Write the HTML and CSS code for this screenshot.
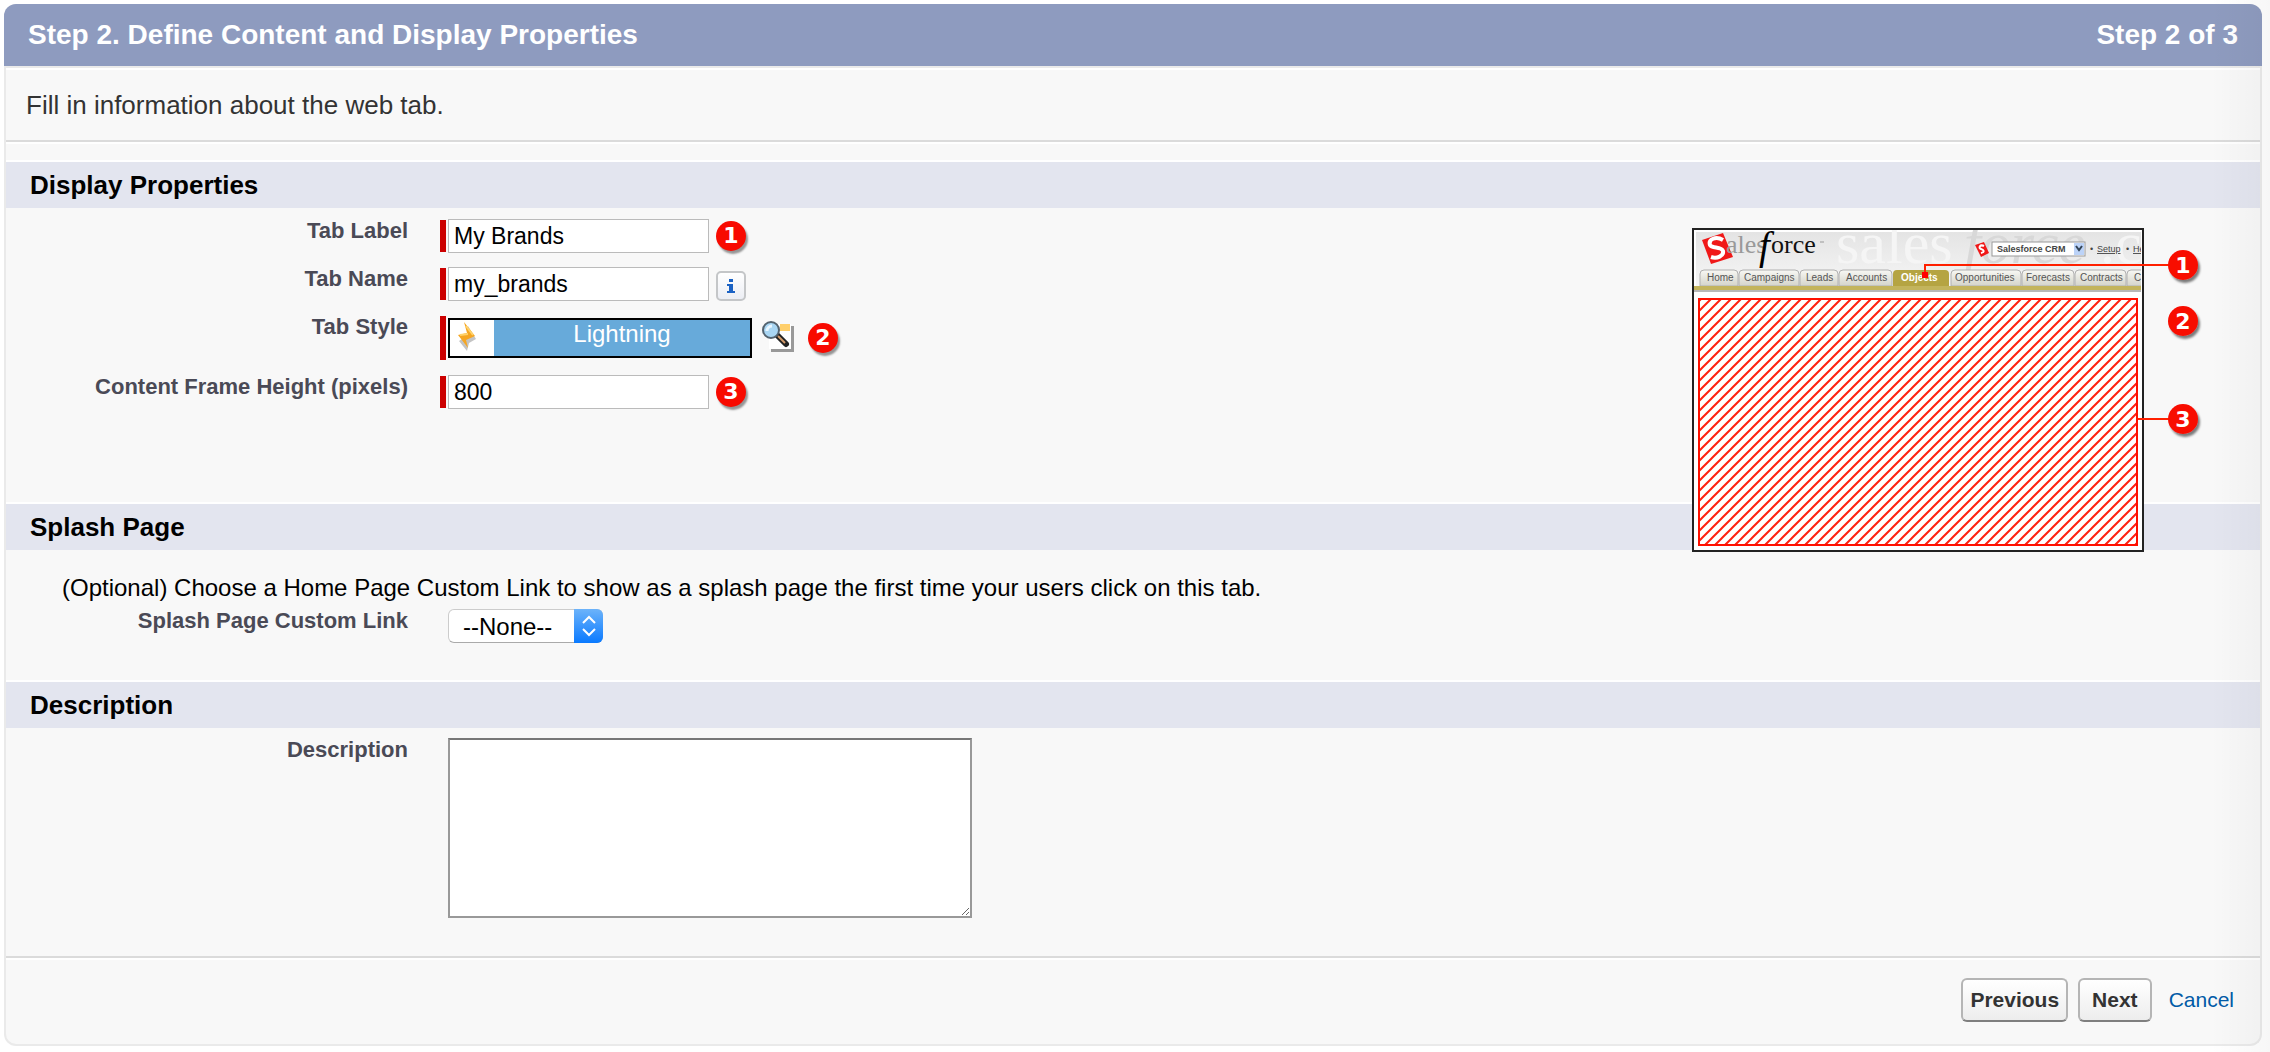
FILE: index.html
```html
<!DOCTYPE html>
<html lang="en">
<head>
    <meta charset="UTF-8">
    <meta name="viewport" content="width=device-width, initial-scale=1.0">
    <title>New Web Tab</title>
    <link rel="stylesheet" href="styles.css">
</head>
<body>
    <form class="wizard">
        <header class="wizard-header">
            <h1>Step 2. Define Content and Display Properties</h1>
            <span>Step 2 of 3</span>
        </header>
        <p class="intro">Fill in information about the web tab.</p>

        <section class="section display-section">
            <h2>Display Properties</h2>
            <div class="rows">
                <div class="row">
                    <label for="tabLabel">Tab Label</label>
                    <div class="field required">
                        <input type="text" id="tabLabel" value="My Brands">
                        <span class="badge">1</span>
                    </div>
                </div>
                <div class="row">
                    <label for="tabName">Tab Name</label>
                    <div class="field required">
                        <input type="text" id="tabName" value="my_brands">
                        <button type="button" class="info-button" aria-label="Help">
                            <svg width="30" height="30" viewBox="0 0 30 30"><path d="M13 8h4v3h-4zM11 13h6v7h2v2h-8v-2h2v-5h-2z" fill="#1b62c4"/></svg>
                        </button>
                    </div>
                </div>
                <div class="row">
                    <label for="tabStyle">Tab Style</label>
                    <div class="field required tall">
                        <button type="button" id="tabStyle" class="tab-style">
                            <svg width="44" height="36" viewBox="0 0 44 36">
                                <path d="M18 6l8 13-7 4-2 8-8-10 9-6z" fill="#c4c4c4"/>
                                <path d="M14 2l11 14-9 4 2 8-10-13 9-2z" fill="#f5a623"/>
                                <path d="M16 6l7 9M10 15l8-1" stroke="#ffd36b" stroke-width="2" fill="none"/>
                            </svg>
                            <span>Lightning</span>
                        </button>
                        <button type="button" class="lookup-button" aria-label="Tab Style Lookup">
                            <svg width="34" height="34" viewBox="0 0 34 34">
                                <path d="M9 5h23v26H9z" fill="#999"/>
                                <path d="M7 3h22v25H7z" fill="#fff"/>
                                <path d="M18 3h10v7H18z" fill="#ffcf6b"/>
                                <path d="M16 15l8 8" stroke="#222" stroke-width="6" stroke-linecap="round"/>
                                <path d="M16 15l7 7" stroke="#d29a6a" stroke-width="2"/>
                                <circle cx="9" cy="9" r="8" fill="#a9d6f3" stroke="#54636f" stroke-width="2"/>
                                <path d="M5 10a5 5 0 0 1 5-5" stroke="#e8f6ff" stroke-width="3" fill="none"/>
                            </svg>
                        </button>
                        <span class="badge">2</span>
                    </div>
                </div>
                <div class="row">
                    <label for="frameHeight">Content Frame Height (pixels)</label>
                    <div class="field required">
                        <input type="text" id="frameHeight" value="800">
                        <span class="badge">3</span>
                    </div>
                </div>
            </div>

            <svg class="preview" width="512" height="324" viewBox="0 0 512 324" role="img" aria-label="Web tab layout">
                <defs>
                    <pattern id="hatch" width="10" height="10" patternUnits="userSpaceOnUse">
                        <path d="M-2 12L12 -2M-2 2L2 -2M8 12L12 8" stroke="#ff2010" stroke-width="2"/>
                    </pattern>
                    <linearGradient id="sky" x1="0" y1="0" x2="0" y2="1">
                        <stop offset="0" stop-color="#e4e4e4"/>
                        <stop offset="1" stop-color="#f6f6f6"/>
                    </linearGradient>
                    <linearGradient id="tab" x1="0" y1="0" x2="0" y2="1">
                        <stop offset="0" stop-color="#f8f8f4"/>
                        <stop offset="1" stop-color="#d4d4ca"/>
                    </linearGradient>
                    <clipPath id="frame"><rect x="2" y="2" width="447" height="320"/></clipPath>
                    <filter id="shadow" x="-30%" y="-30%" width="170%" height="170%">
                        <feDropShadow dx="2" dy="3" stdDeviation="1" flood-color="#000" flood-opacity="0.5"/>
                    </filter>
                </defs>
                <rect x="1" y="1" width="450" height="322" fill="#fff" stroke="#222" stroke-width="2"/>
                <g clip-path="url(#frame)">
                    <rect x="4" y="4" width="445" height="55" fill="url(#sky)"/>
                    <g class="watermark">
                        <text x="144" y="35" fill="#f5f5f5">sales</text>
                        <text x="272" y="35" fill="#d8d8d8" font-style="italic">force</text>
                        <text x="408" y="35" fill="#f5f5f5">.c</text>
                    </g>
                    <path d="M10 12L31 5 41 29 19 36z" fill="#f01818"/>
                    <path d="M31 12c-7-4-15-1-13 5 2 4 11 1 13 6 1 5-6 8-12 6" fill="none" stroke="#fff" stroke-width="4"/>
                    <g class="logo">
                        <text x="34" y="25" fill="#999">ales</text>
                        <text x="67" y="31" class="logo-f">f</text>
                        <text x="79" y="25" fill="#111">orce</text>
                    </g>
                    <path d="M128 14h4" stroke="#999"/>
                    <path d="M283 17l9-3 5 11-8 4z" fill="#f01818"/>
                    <path d="M292 18c-4-2-6 2-3 3s4 3 0 4" fill="none" stroke="#fff" stroke-width="2"/>
                    <rect x="300" y="14" width="93" height="14" fill="#fff" stroke="#999"/>
                    <rect x="382" y="15" width="10" height="12" fill="#bcd3f8"/>
                    <path d="M384 18l3 4 3-4" fill="none" stroke="#345" stroke-width="2"/>
                    <g class="small-text">
                        <text x="305" y="24" font-weight="bold">Salesforce CRM</text>
                        <text x="398" y="24">•</text>
                        <text x="405" y="24" text-decoration="underline">Setup</text>
                        <text x="434" y="24">•</text>
                        <text x="441" y="24" text-decoration="underline">He</text>
                    </g>
                    <g fill="url(#tab)" stroke="#b0b0b0">
                        <path d="M8 58V46q0-4 4-4h30q4 0 4 4v12z"/>
                        <path d="M47 58V46q0-4 4-4h52q4 0 4 4v12z"/>
                        <path d="M108 58V46q0-4 4-4h30q4 0 4 4v12z"/>
                        <path d="M147 58V46q0-4 4-4h45q4 0 4 4v12z"/>
                        <path d="M259 58V46q0-4 4-4h62q4 0 4 4v12z"/>
                        <path d="M330 58V46q0-4 4-4h44q4 0 4 4v12z"/>
                        <path d="M383 58V46q0-4 4-4h43q4 0 4 4v12z"/>
                        <path d="M435 58V46q0-4 4-4h43v16z"/>
                    </g>
                    <path d="M201 59V46q0-4 4-4h48q4 0 4 4v13z" fill="#b5a442"/>
                    <rect x="2" y="58" width="447" height="4" fill="#c3b45c"/>
                    <rect x="2" y="62" width="447" height="2" fill="#b8b8b8"/>
                    <g class="tab-text">
                        <text x="15" y="53">Home</text>
                        <text x="52" y="53">Campaigns</text>
                        <text x="114" y="53">Leads</text>
                        <text x="154" y="53">Accounts</text>
                        <text x="209" y="53" class="current">Objects</text>
                        <text x="263" y="53">Opportunities</text>
                        <text x="334" y="53">Forecasts</text>
                        <text x="388" y="53">Contracts</text>
                        <text x="442" y="53">C</text>
                    </g>
                </g>
                <rect x="7" y="71" width="438" height="246" fill="url(#hatch)" stroke="#ff1000" stroke-width="2"/>
                <path d="M233 47V37H480M446 191H480" fill="none" stroke="#ff2000" stroke-width="2"/>
                <rect x="230" y="44" width="6" height="6" fill="#f00"/>
                <g fill="#f80a00" filter="url(#shadow)">
                    <circle cx="491" cy="37" r="15"/>
                    <circle cx="491" cy="93" r="15"/>
                    <circle cx="491" cy="191" r="15"/>
                </g>
                <g class="callout-text">
                    <text x="491" y="45">1</text>
                    <text x="491" y="101">2</text>
                    <text x="491" y="199">3</text>
                </g>
            </svg>
        </section>

        <section class="section splash-section">
            <h2>Splash Page</h2>
            <p>(Optional) Choose a Home Page Custom Link to show as a splash page the first time your users click on this tab.</p>
            <div class="row">
                <label for="splashLink">Splash Page Custom Link</label>
                <div class="field">
                    <div class="select-box">
                        <select id="splashLink">
                            <option>--None--</option>
                        </select>
                        <svg width="29" height="34" viewBox="0 0 29 34"><path d="M9 14l6-6 6 6M9 20l6 6 6-6" fill="none" stroke="#fff" stroke-width="2"/></svg>
                    </div>
                </div>
            </div>
        </section>

        <section class="section description-section">
            <h2>Description</h2>
            <div class="row">
                <label for="description">Description</label>
                <div class="field">
                    <textarea id="description"></textarea>
                </div>
            </div>
        </section>

        <footer class="wizard-footer">
            <button type="button" class="btn">Previous</button>
            <button type="submit" class="btn">Next</button>
            <a href="#">Cancel</a>
        </footer>
    </form>
</body>
</html>
```
FILE: styles.css
```css
* {
    box-sizing: border-box;
}
body {
    margin: 0;
    padding: 4px 8px 6px 4px;
    position: relative;
    background-color: #fff;
    color: #000;
    font-family: "Liberation Sans", Arial, sans-serif;
    font-size: 24px;
}
/* faint shade along the right edge of the page */
body::after {
    content: "";
    position: absolute;
    top: 0;
    right: 0;
    bottom: 0;
    width: 60px;
    background: linear-gradient(to right, transparent, rgba(0, 0, 0, 0.03));
    pointer-events: none;
}
.wizard {
    border: 2px solid #eaeaea;
    border-top: none;
    border-radius: 12px;
    background-color: #f8f8f8;
}
.wizard-header {
    display: flex;
    justify-content: space-between;
    align-items: center;
    height: 62px;
    margin: 0 -2px;
    padding: 0 24px;
    border-radius: 12px 12px 0 0;
    background-color: #8e9bbf;
    color: #fff;
    font-size: 28px;
    font-weight: bold;
}
.wizard-header h1 {
    margin: 0;
    font-size: 28px;
}
.intro {
    margin: 0 0 18px;
    padding: 23px 20px 21px;
    border-top: 2px solid #eaeaea;
    border-bottom: 2px solid #dbdbdb;
    box-shadow: inset 0 2px #fff, 0 2px #fff;
    color: #333;
    font-size: 26px;
    line-height: 28px;
}
.section {
    position: relative;
}
.section h2 {
    margin: 0;
    padding: 0 24px;
    border-top: 2px solid #fff;
    background-color: #e3e5ef;
    font-size: 26px;
    line-height: 46px;
}
.rows {
    display: flex;
    flex-direction: column;
    gap: 14px;
    padding: 11px 0 93px;
}
.row {
    display: flex;
    align-items: flex-start;
}
.row label {
    flex: 0 0 402px;
    color: #4a4a56;
    font-size: 22px;
    font-weight: bold;
    line-height: 24px;
    text-align: right;
}
.field {
    display: flex;
    align-items: center;
    margin-left: 40px;
}
.required {
    height: 34px;
    margin-left: 32px;
}
.required::before {
    content: "";
    align-self: stretch;
    width: 6px;
    margin: 1px 2px 1px 0;
    background-color: #c00;
}
.tall {
    height: 46px;
}
input[type="text"] {
    width: 261px;
    height: 34px;
    margin: 0;
    padding: 0 5px;
    border: 1px solid #bbb;
    background-color: #fff;
    font-family: inherit;
    font-size: 23px;
}
.badge {
    width: 30px;
    height: 30px;
    margin-left: 7px;
    border-radius: 50%;
    background-color: #f80a00;
    box-shadow: 2px 3px 2px rgba(0, 0, 0, 0.4);
    color: #fff;
    font-family: "DejaVu Sans", sans-serif;
    font-size: 22px;
    font-weight: bold;
    line-height: 30px;
    text-align: center;
}
.info-button {
    width: 30px;
    height: 30px;
    margin: 4px 0 0 7px;
    padding: 0;
    border: 2px solid #c4c6c8;
    border-radius: 5px;
    background: linear-gradient(#fff, #eceef4);
}
.info-button svg {
    display: block;
    margin: -2px;
}
.tab-style {
    display: flex;
    width: 304px;
    height: 40px;
    padding: 0;
    border: 2px solid #000;
    background-color: #fff;
    font-family: inherit;
}
.tab-style span {
    flex: 1;
    height: 36px;
    background-color: #67aada;
    color: #fff;
    font-size: 24px;
    line-height: 28px;
}
.lookup-button {
    height: 34px;
    margin-left: 10px;
    padding: 0;
    border: none;
    background: none;
}
.lookup-button + .badge {
    margin-left: 12px;
}
.preview {
    position: absolute;
    top: 68px;
    right: 56px;
    z-index: 1;
}
.watermark {
    font-family: "Liberation Serif", serif;
    font-size: 60px;
}
.logo {
    font-family: "Liberation Serif", serif;
    font-size: 26px;
}
.logo-f {
    font-size: 39px;
    font-style: italic;
}
.small-text {
    fill: #444;
    font-size: 9px;
}
.tab-text {
    fill: #555;
    font-size: 10px;
}
.tab-text .current {
    fill: #fff;
    font-weight: bold;
}
.callout-text {
    fill: #fff;
    font-family: "DejaVu Sans", sans-serif;
    font-size: 22px;
    font-weight: bold;
    text-anchor: middle;
}
.splash-section {
    padding-bottom: 37px;
}
.splash-section p {
    margin: 24px 56px 7px;
    line-height: 28px;
}
.select-box {
    position: relative;
    height: 34px;
}
.select-box select {
    width: 155px;
    height: 34px;
    padding: 0 16px 0 14px;
    border: 1px solid #ccc;
    border-bottom-color: #aaa;
    border-radius: 6px;
    background-color: #fff;
    color: #000;
    font-family: inherit;
    font-size: 24px;
    appearance: none;
}
.select-box svg {
    position: absolute;
    top: 0;
    right: 0;
    border-radius: 0 6px 6px 0;
    background: linear-gradient(#6cb3fa, #0a7aff);
    pointer-events: none;
}
.description-section {
    padding-bottom: 38px;
}
.description-section .row {
    padding-top: 10px;
}
textarea {
    width: 524px;
    height: 180px;
    margin: 0;
    border: 2px solid #999;
    border-top-color: #777;
    background-color: #fff;
    font-family: inherit;
    font-size: 23px;
}
.wizard-footer {
    display: flex;
    justify-content: flex-end;
    align-items: center;
    gap: 10px;
    padding: 20px 26px 22px;
    border-top: 2px solid #dbdbdb;
    box-shadow: inset 0 2px #fff;
}
.btn {
    height: 44px;
    padding: 0 7px;
    border: 2px solid #b5b5b5;
    border-bottom-color: #7f7f7f;
    border-radius: 6px;
    background: linear-gradient(#fff, #ededed);
    color: #333;
    font-family: inherit;
    font-size: 21px;
    font-weight: bold;
}
.btn + .btn {
    padding: 0 12px;
}
.wizard-footer a {
    margin-left: 7px;
    color: #015ba7;
    font-size: 21px;
    text-decoration: none;
}
```
